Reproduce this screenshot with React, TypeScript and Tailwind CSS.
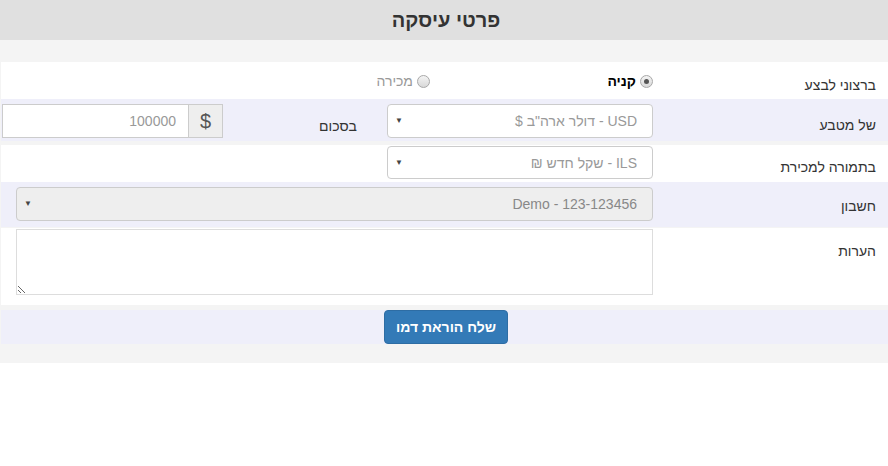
import React from 'react';

const Caret: React.FC = () => (
  <span className="pointer-events-none absolute left-[8px] top-1/2 -translate-y-1/2 text-[8px] leading-none text-[#444]">▼</span>
);

const Radio: React.FC<{ checked?: boolean }> = ({ checked }) => (
  <span className="flex h-[13px] w-[13px] items-center justify-center rounded-full border border-[#a8a8a8] bg-gradient-to-b from-[#f4f4f4] to-[#d8d8d8]">
    {checked && <span className="h-[5px] w-[5px] rounded-full bg-[#555]" />}
  </span>
);

const App: React.FC = () => {
  return (
    <div dir="rtl" className="h-[466px] w-[888px] bg-white font-['Liberation_Sans',Arial,sans-serif] text-[14px] leading-[20px] text-[#333]">
      <div className="flex h-10 items-center justify-center bg-[#e0e0e0] pl-[4px]">
        <h2 className="text-[20px] font-bold text-[#333]">פרטי עיסקה</h2>
      </div>

      <div className="bg-[#f4f4f4] pb-[19px] pl-px pt-[22px]">
        {/* action */}
        <div className="flex h-[37px] bg-white">
          <label className="w-[235px] shrink-0 pr-[12px] pt-[13px]">ברצוני לבצע</label>
          <div className="flex items-center pt-[1px]">
            <label className="flex w-[223px] items-center gap-[4px] font-bold text-black">
              <Radio checked />
              קניה
            </label>
            <label className="flex items-center gap-[4px] text-[#999]">
              <Radio />
              מכירה
            </label>
          </div>
        </div>

        {/* currency */}
        <div className="flex h-[42px] bg-[#efeffa] pt-[5px]">
          <label className="w-[235px] shrink-0 pr-[12px] pt-[11px]">של מטבע</label>
          <div className="relative h-[34px] w-[266px] shrink-0">
            <select className="h-full w-full appearance-none rounded-[4px] border border-[#ccc] bg-white pl-6 pr-[15px] text-[14px] text-[#999] outline-none">
              <option>USD - דולר ארה"ב $</option>
            </select>
            <Caret />
          </div>
          <label className="mr-[30px] pt-[12px]">בסכום</label>
          <div className="mr-auto flex h-[34px] w-[222px] pl-px">
            <span className="flex w-[35px] items-center justify-center border border-[#ccc] bg-[#eee] text-[20px] text-[#555]">$</span>
            <input
              readOnly
              value="100000"
              className="h-full min-w-0 flex-1 border border-r-0 border-[#ccc] bg-white px-[12px] text-right text-[14px] text-[#999] outline-none"
            />
          </div>
        </div>

        {/* exchange currency */}
        <div className="mt-[4px] flex h-[37px] bg-white pt-[1px]">
          <label className="w-[235px] shrink-0 pr-[12px] pt-[11px]">בתמורה למכירת</label>
          <div className="relative h-[33px] w-[266px] shrink-0">
            <select className="h-full w-full appearance-none rounded-[4px] border border-[#ccc] bg-white pl-6 pr-[15px] text-[14px] text-[#999] outline-none">
              <option>ILS - שקל חדש ₪</option>
            </select>
            <Caret />
          </div>
        </div>

        {/* account */}
        <div className="flex h-[45px] bg-[#efeffa] pt-[5px]">
          <label className="w-[235px] shrink-0 pr-[12px] pt-[9px]">חשבון</label>
          <div className="flex-1 pl-[15px]">
            <div className="relative h-[34px]">
              <select
                disabled
                className="h-full w-full appearance-none rounded-[4px] border border-[#ccc] bg-[#eee] pl-6 pr-[15px] text-[14px] text-[#888] opacity-100 outline-none"
              >
                <option>Demo - 123-123456</option>
              </select>
              <Caret />
            </div>
          </div>
        </div>

        {/* notes */}
        <div className="mt-px flex h-[77px] bg-white pt-px">
          <label className="w-[235px] shrink-0 pr-[12px] pt-[12px]">הערות</label>
          <div className="flex-1 pl-[15px]">
            <textarea className="block h-[66px] w-full border border-[#ddd] bg-white p-1 text-[14px] outline-none" />
          </div>
        </div>

        {/* submit */}
        <div className="mt-[5px] flex h-[34px] justify-center bg-[#efeffa] pl-[3px]">
          <button className="h-[34px] w-[124px] rounded-[4px] border border-[#2e6da4] bg-[#337ab7] text-[14px] font-bold text-white">
            שלח הוראת דמו
          </button>
        </div>
      </div>
    </div>
  );
};

export default App;
